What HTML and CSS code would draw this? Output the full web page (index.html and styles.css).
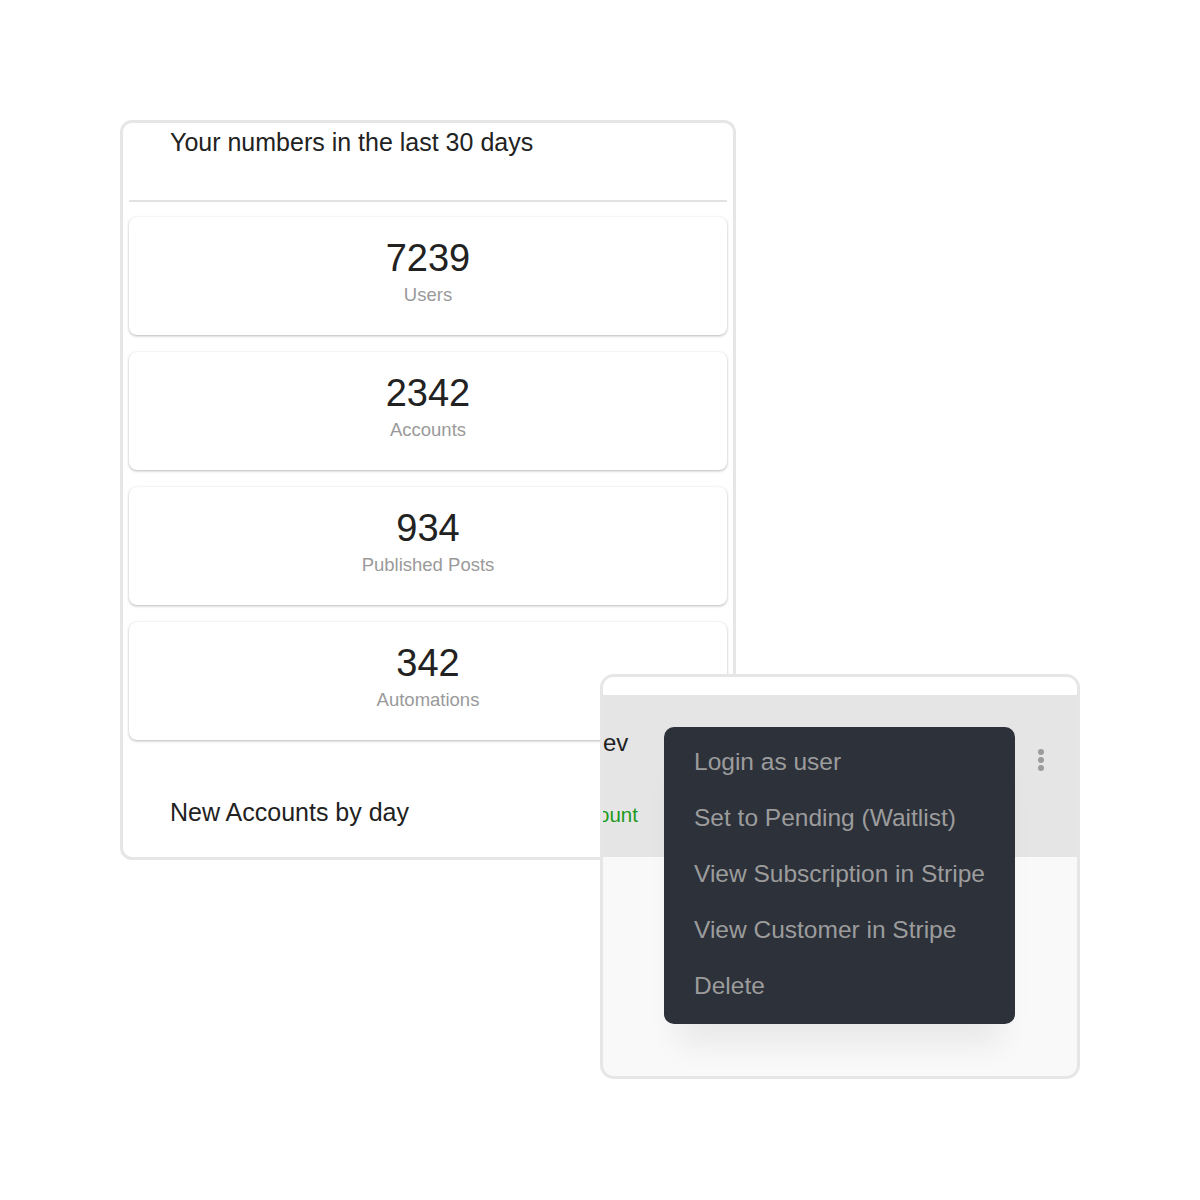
FILE: index.html
```html
<!DOCTYPE html>
<html lang="en">
<head>
<meta charset="utf-8">
<title>Dashboard</title>
<link rel="stylesheet" href="styles.css">
</head>
<body>
<div class="stage">
  <section class="stats-panel">
    <header class="stats-header">
      <h2 class="panel-title">Your numbers in the last 30 days</h2>
    </header>
    <div class="stat-list">
      <div class="stat-card">
        <div class="stat-value">7239</div>
        <div class="stat-label">Users</div>
      </div>
      <div class="stat-card">
        <div class="stat-value">2342</div>
        <div class="stat-label">Accounts</div>
      </div>
      <div class="stat-card">
        <div class="stat-value">934</div>
        <div class="stat-label">Published Posts</div>
      </div>
      <div class="stat-card">
        <div class="stat-value">342</div>
        <div class="stat-label">Automations</div>
      </div>
    </div>
    <div class="chart-section">
      <h2 class="panel-title">New Accounts by day</h2>
    </div>
  </section>

  <section class="accounts-panel">
    <div class="accounts-top"></div>
    <div class="account-row">
      <div class="account-info">
        <div class="account-name">ev</div>
        <div class="account-type">ount</div>
      </div>
      <button class="kebab" aria-label="More actions">
        <span class="dot"></span><span class="dot"></span><span class="dot"></span>
      </button>
    </div>
    <div class="accounts-rest"></div>
    <ul class="action-menu">
      <li>Login as user</li>
      <li>Set to Pending (Waitlist)</li>
      <li>View Subscription in Stripe</li>
      <li>View Customer in Stripe</li>
      <li>Delete</li>
    </ul>
  </section>
</div>
</body>
</html>
```

FILE: styles.css
```css
* { box-sizing: border-box; }

html, body {
  margin: 0;
  padding: 0;
  background: #ffffff;
}

body {
  font-family: "Liberation Sans", Arial, Helvetica, sans-serif;
  color: #222222;
}

.stage {
  position: relative;
  width: 1200px;
  height: 1200px;
  padding: 120px 0 0 120px;
}

/* Left panel */
.stats-panel {
  width: 616px;
  height: 740px;
  border: 3px solid #e6e6e6;
  border-radius: 12px;
  padding: 0 6px;
  background: #ffffff;
  display: flex;
  flex-direction: column;
}

.stats-header {
  height: 79px;
  padding: 5px 0 0 41px;
  border-bottom: 2px solid #e2e2e2;
}

.panel-title {
  margin: 0;
  font-size: 25px;
  line-height: 28px;
  font-weight: 400;
  color: #222222;
}

.stat-list {
  display: flex;
  flex-direction: column;
  gap: 17px;
  padding-top: 15px;
}

.stat-card {
  height: 118px;
  border-radius: 8px;
  background: #ffffff;
  box-shadow: 0 1px 3px rgba(0, 0, 0, 0.28), 0 0 1px rgba(0, 0, 0, 0.06);
  padding-top: 21px;
  text-align: center;
}

.stat-value {
  font-size: 38px;
  line-height: 40px;
  color: #222222;
}

.stat-label {
  margin-top: 6px;
  font-size: 18.5px;
  line-height: 22px;
  color: #9a9a9a;
}

.chart-section {
  padding: 58px 0 0 41px;
}

/* Right panel (overlapping) */
.accounts-panel {
  position: absolute;
  left: 600px;
  top: 674px;
  width: 480px;
  height: 405px;
  border: 3px solid #e6e6e6;
  border-radius: 14px;
  background: #f9f9f9;
  overflow: hidden;
  display: flex;
  flex-direction: column;
}

.accounts-top {
  height: 18px;
  background: #ffffff;
}

.account-row {
  height: 162px;
  background: #e5e5e5;
  display: flex;
  justify-content: space-between;
  align-items: flex-start;
}

.account-info {
  padding-top: 34px;
}

.account-name {
  font-size: 24px;
  line-height: 28px;
  color: #222222;
}

.account-type {
  margin-top: 46px;
  margin-left: -5px;
  font-size: 20.5px;
  line-height: 24px;
  color: #1e9a1e;
}

.kebab {
  margin: 54px 31px 0 0;
  padding: 0;
  border: 0;
  background: transparent;
  width: 10px;
  display: flex;
  flex-direction: column;
  align-items: center;
  gap: 2px;
}

.dot {
  display: block;
  width: 6px;
  height: 6px;
  border-radius: 50%;
  background: #9b9b9b;
}

.accounts-rest {
  flex: 1;
}

.action-menu {
  position: absolute;
  left: 61px;
  top: 50px;
  width: 351px;
  height: 297px;
  margin: 0;
  padding: 7px 0 10px 30px;
  list-style: none;
  background: #2c313a;
  border-radius: 10px;
  box-shadow: 0 34px 30px -14px rgba(0, 0, 0, 0.07);
}

.action-menu li {
  font-size: 24.5px;
  line-height: 56px;
  color: #9c9c9c;
  white-space: nowrap;
}
```
